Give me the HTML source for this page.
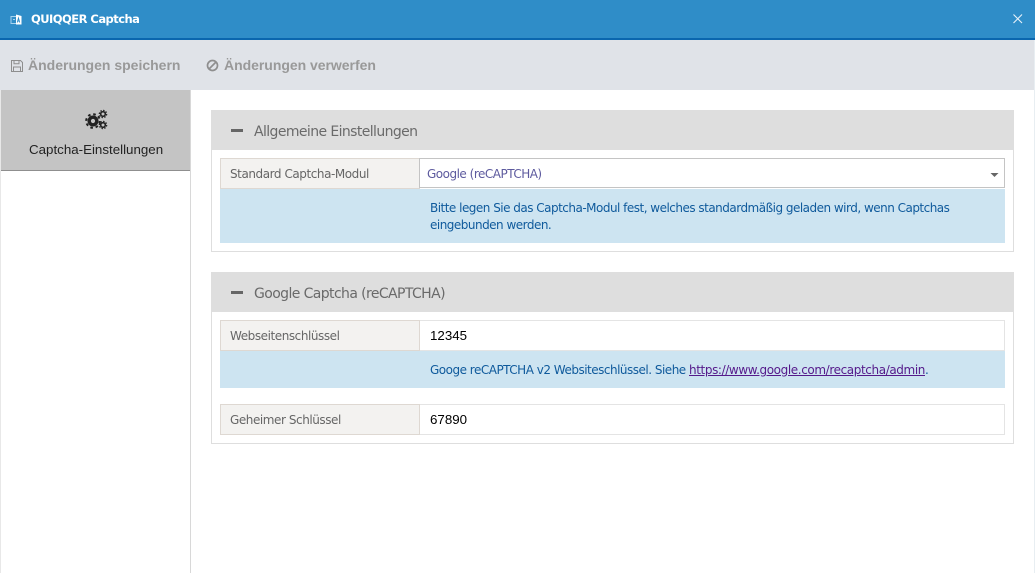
<!DOCTYPE html>
<html><head><meta charset="utf-8"><style>
html,body{margin:0;padding:0;width:1035px;height:573px;overflow:hidden;background:#fff}
div,a,svg{position:absolute;box-sizing:border-box}
.t{white-space:nowrap;font-family:"DejaVu Sans",sans-serif}
.l{font-family:"Liberation Sans",sans-serif;white-space:nowrap}
.head{background:#dedede;left:211px;width:803px;height:40px}
.box{left:211px;width:803px;border:1px solid #dedede;border-top:0}
.label{left:220px;width:200px;background:#f3f2f0;border:1px solid #ded8d2;border-right:1px solid #ded8d2}
.inp{left:420px;width:585px;background:#fff;border:1px solid #e4e4e4;border-left:0}
.info{left:220px;width:785px;background:#cde4f1}
.lt{color:#666;font-size:12px;letter-spacing:-.44px}
.it{color:#0f5a9c;font-size:12px;letter-spacing:-.5px}
.h{color:#6a6a6a;font-size:14px;letter-spacing:-.6px}
.dash{left:231px;width:12px;height:3px;background:#666}
</style></head><body>
<div style="left:0;top:0;width:1035px;height:40px;background:#2f8dc8;border-bottom:2px solid #0a66ae"></div>
<svg style="left:10px;top:13px" width="13" height="13" viewBox="0 0 13 13"><path d="M1 3.5h6v7H1z" fill="none" stroke="#a8d4ef" stroke-width="1"/><path d="M3 6.5h2" stroke="#a8d4ef" stroke-width="1"/><path d="M6 1.5l5.5 1.5v8.5H6z" fill="#fff"/><path d="M7.3 9.5l1.2-4.5 1.2 4.5M7.7 8h1.7" fill="none" stroke="#2f8dc8" stroke-width=".9"/></svg>
<div class="t" style="left:31px;top:12px;color:#fff;font-weight:bold;font-size:11.5px;letter-spacing:-.53px;line-height:15px">QUIQQER Captcha</div>
<svg style="left:1012px;top:13px" width="12" height="12" viewBox="0 0 12 12"><path d="M1.5 1.5l8.5 8.5M10 1.5l-8.5 8.5" stroke="#e8f2f9" stroke-width="1.1" fill="none"/></svg>

<div style="left:0;top:40px;width:1035px;height:50px;background:#e0e3e8"></div>
<svg style="left:11px;top:60px" width="12" height="12" viewBox="0 0 12 12"><path d="M.5.5h9l2 2v9H.5zM3 .8v3h5v-3M2.5 11V7h7v4" fill="none" stroke="#8e8e8e" stroke-width="1"/></svg>
<div class="l" style="left:28px;top:57px;color:#999;font-weight:bold;font-size:14px;line-height:16px">Änderungen speichern</div>
<svg style="left:206px;top:59px" width="13" height="13" viewBox="0 0 13 13"><circle cx="6.5" cy="6.5" r="5" fill="none" stroke="#8e8e8e" stroke-width="1.7"/><path d="M3 10L10 3" stroke="#8e8e8e" stroke-width="1.7"/></svg>
<div class="l" style="left:224px;top:57px;color:#999;font-weight:bold;font-size:14px;letter-spacing:-.03px;line-height:16px">Änderungen verwerfen</div>

<div style="left:0;top:90px;width:1px;height:483px;background:#e8e8e8"></div>
<div style="left:1034px;top:40px;width:1px;height:533px;background:#e8eef2"></div>
<div style="left:190px;top:90px;width:1px;height:483px;background:#d8d8d8"></div>
<div style="left:1px;top:90px;width:189px;height:81px;background:#c4c4c4;border-bottom:1px solid #8f8f8f"></div>
<svg style="left:85px;top:109px" width="23" height="22" viewBox="0 0 23 22">
<g fill="none" stroke="#222"><circle cx="8" cy="12" r="3.8" stroke-width="3.4"/><circle cx="8" cy="12" r="6.8" stroke-width="2" stroke-dasharray="2.6 2.74"/><circle cx="18" cy="5" r="2.3" stroke-width="1.6"/><circle cx="18" cy="5" r="3.7" stroke-width="1.2" stroke-dasharray="1.5 1.4"/><circle cx="18" cy="16" r="2.3" stroke-width="1.6"/><circle cx="18" cy="16" r="3.7" stroke-width="1.2" stroke-dasharray="1.5 1.4"/></g></svg>
<div class="l" style="left:29px;top:142px;color:#222;font-size:13.33px;line-height:15px">Captcha-Einstellungen</div>

<div class="head" style="top:110px"></div>
<div class="dash" style="top:129px"></div>
<div class="t h" style="left:254px;top:123px;line-height:18px">Allgemeine Einstellungen</div>
<div class="box" style="top:150px;height:102px"></div>
<div class="label" style="top:158px;height:31px"></div>
<div class="t lt" style="left:230px;top:167px;line-height:15px">Standard Captcha-Modul</div>
<div style="left:419px;top:158px;width:586px;height:30px;background:#fff;border:1px solid #c4c4c4"></div>
<div class="t" style="left:427px;top:167px;color:#5d5a9e;font-size:12px;letter-spacing:-.5px;line-height:15px">Google (reCAPTCHA)</div>
<svg style="left:990px;top:172px" width="10" height="6" viewBox="0 0 10 6"><path d="M.5 1h8L4.5 5z" fill="#666"/></svg>
<div class="info" style="top:189px;height:54px"></div>
<div class="t it" style="left:430px;top:200px;letter-spacing:-.51px;line-height:17px">Bitte legen Sie das Captcha-Modul fest, welches standardmäßig geladen wird, wenn Captchas<br>eingebunden werden.</div>

<div class="head" style="top:272px"></div>
<div class="dash" style="top:291px"></div>
<div class="t h" style="left:254px;top:285px;line-height:18px">Google Captcha (reCAPTCHA)</div>
<div class="box" style="top:312px;height:132px"></div>
<div class="label" style="top:320px;height:31px"></div>
<div class="inp" style="top:320px;height:31px"></div>
<div class="t lt" style="left:230px;top:329px;line-height:15px">Webseitenschlüssel</div>
<div class="l" style="left:430px;top:328px;color:#000;font-size:13.33px;line-height:15px">12345</div>
<div class="info" style="top:351px;height:37px"></div>
<div class="t it" style="left:430px;top:362px;letter-spacing:-.5px;line-height:17px">Googe reCAPTCHA v2 Websiteschlüssel. Siehe <span style="color:#551a8b;text-decoration:underline;letter-spacing:-.39px">https://www.google.com/recaptcha/admin</span>.</div>
<div class="label" style="top:404px;height:31px"></div>
<div class="inp" style="top:404px;height:31px"></div>
<div class="t lt" style="left:230px;top:413px;line-height:15px">Geheimer Schlüssel</div>
<div class="l" style="left:430px;top:412px;color:#000;font-size:13.33px;line-height:15px">67890</div>
</body></html>
